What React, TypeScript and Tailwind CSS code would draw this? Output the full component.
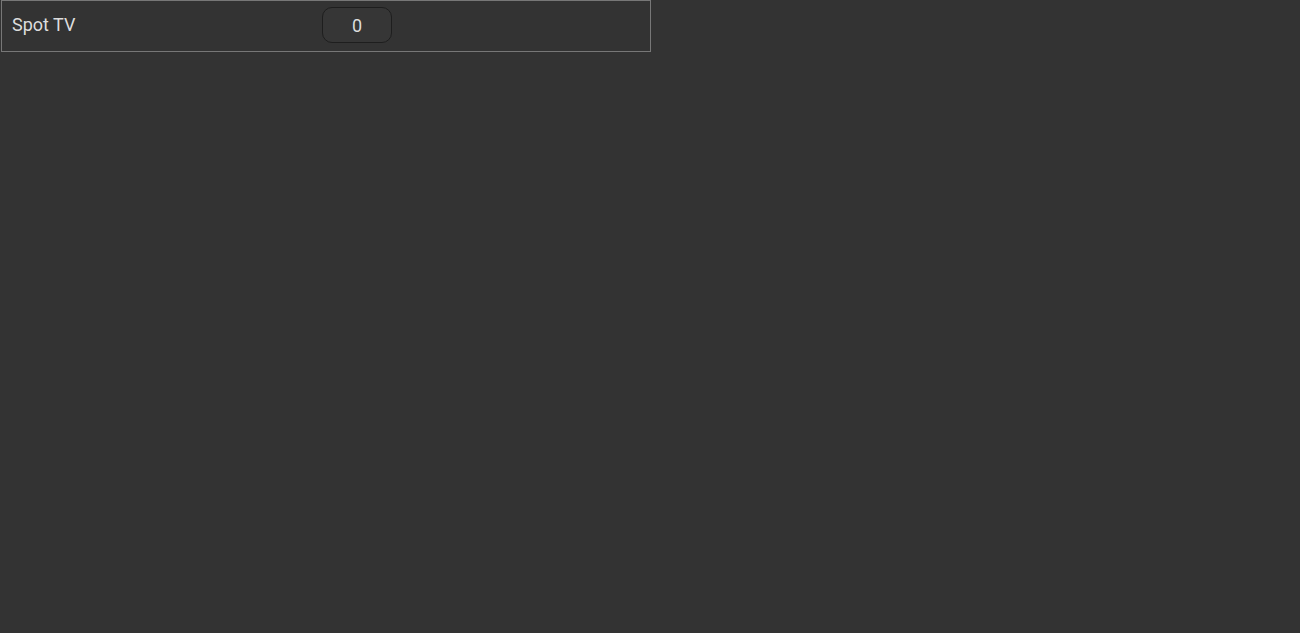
export default function App() {
  return (
    <div className="min-h-[633px] w-full bg-[#333333] font-['Roboto',sans-serif]">
      <div className="ml-px flex h-[52px] w-[650px] items-start border border-[#777777]">
        <div className="w-[320px] pl-[10px] pt-[10px] text-[18px] leading-[27px] text-[#dddddd]">Spot TV</div>
        <input
          type="text"
          defaultValue="0"
          className="mt-[6px] h-[36px] w-[70px] rounded-[10px] border border-[#1e1e1e] bg-[#363636] text-center text-[18px] text-[#dddddd] outline-none"
        />
      </div>
    </div>
  )
}
